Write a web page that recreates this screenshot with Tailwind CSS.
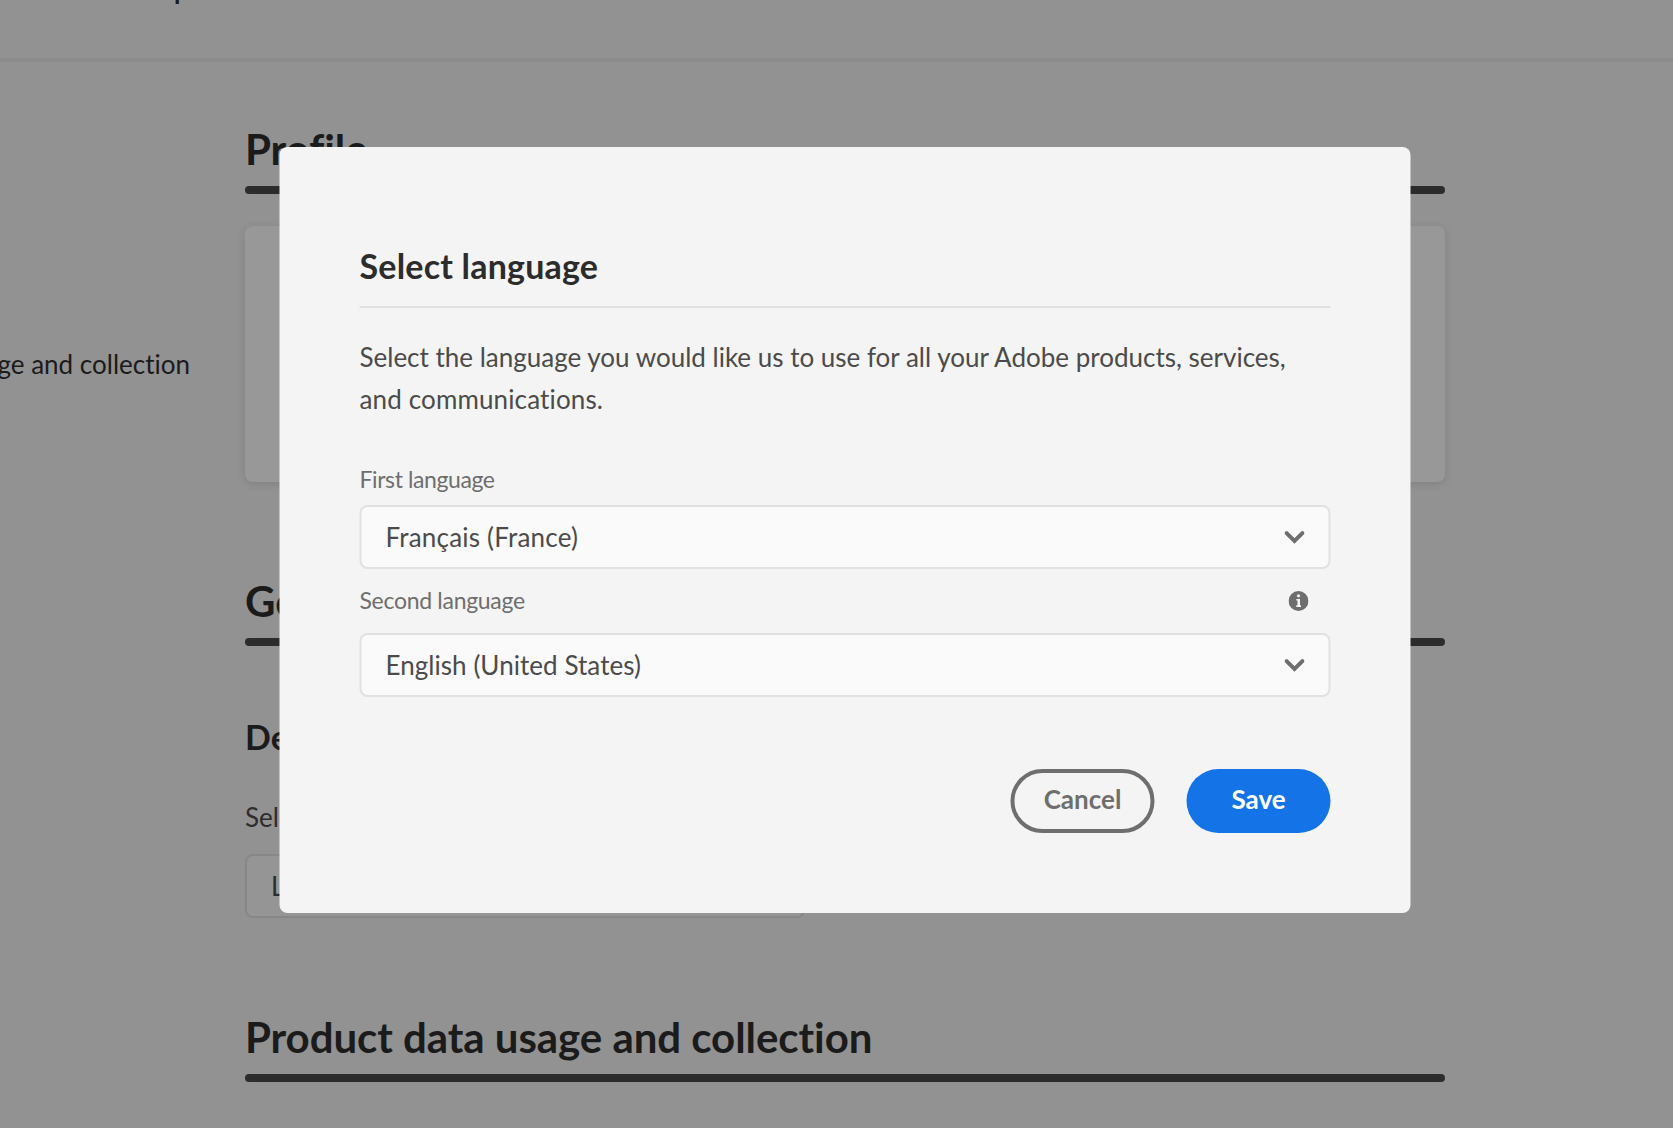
<!DOCTYPE html>
<html lang="en">
<head>
<meta charset="utf-8">
<title>Select language</title>
<script src="https://cdn.jsdelivr.net/npm/@tailwindcss/browser@4"></script>
</head>
<body class="relative h-[1128px] w-[1673px] overflow-hidden bg-[#929292] font-['Lato',sans-serif] text-[#1b1b1b] [font-variant-ligatures:none]">
  <div class="flex h-full flex-col overflow-hidden">
    <header class="h-[62px] shrink-0 overflow-hidden border-b-4 border-[#8b8b8b] pl-[174px]">
      <p class="-mt-[31px] text-[26px] font-bold leading-[42px]">p</p>
    </header>
    <div class="flex">
      <nav class="flex w-[190px] shrink-0 justify-end overflow-hidden pt-[281px]">
        <a class="whitespace-nowrap text-[26px] leading-[42px]">Product data usage and collection</a>
      </nav>
      <main class="ml-[55px] w-[1200px] shrink-0 pt-[63px]">
        <section>
          <h1 class="text-[42px] font-bold leading-[48px] tracking-[-0.05px]">Profile</h1>
          <div class="mt-[13px] h-2 rounded-full bg-[#2c2c2c]"></div>
          <div class="mt-8 h-64 rounded-lg bg-[#989898] shadow-[0_2px_8px_rgba(0,0,0,0.12)]"></div>
        </section>
        <section class="pt-[95px]">
          <h1 class="text-[42px] font-bold leading-[48px] tracking-[-0.05px]">General</h1>
          <div class="mt-[13px] h-2 rounded-full bg-[#2c2c2c]"></div>
          <h2 class="mt-[71px] text-[34px] font-bold leading-[40px]">Default</h2>
          <p class="mt-[39px] text-[26px] leading-[42px] text-[#2d2d2d]">Select</p>
          <div class="mt-4 flex h-16 w-[560px] items-center rounded-lg border-2 border-[#878787] bg-[#959595] pl-6 pt-px text-[26px] text-[#2d2d2d]">L</div>
        </section>
        <section class="pt-[95px]">
          <h1 class="text-[42px] font-bold leading-[48px] tracking-[-0.05px]">Product data usage and collection</h1>
          <div class="mt-[13px] h-2 rounded-full bg-[#2c2c2c]"></div>
        </section>
      </main>
    </div>
  </div>

  <div role="dialog" class="absolute left-[279px] top-[147px] flex h-[766px] w-[1131px] translate-x-[0.5px] flex-col rounded-lg bg-[#f4f4f4] px-20 pt-[99px] text-[#4b4b4b]">
    <h2 class="text-[34px] font-bold leading-[40px] tracking-[0.2px] text-[#2c2c2c]">Select language</h2>
    <div class="mt-5 h-0.5 shrink-0 bg-[#e1e1e1]"></div>
    <p class="mt-[28px] whitespace-nowrap text-[26px] leading-[42px]">Select the language you would like us to use for all your Adobe products, services,<br><span class="tracking-[0.14px]">and communications.</span></p>
    <label class="mt-[43px] text-[23px] leading-8 tracking-[-0.4px] text-[#6e6e6e]">First language</label>
    <div class="mt-[10px] flex h-16 shrink-0 items-center justify-between rounded-lg border-2 border-[#e1e1e1] bg-[#fafafa] pl-6 pr-6 text-[26px]">
      <span class="tracking-[0.2px]">Français (France)</span>
      <svg class="h-[13px] w-5" viewBox="0 0 20 13" fill="none" stroke="#6e6e6e" stroke-width="4" stroke-linecap="round"><path d="M2.1 2.2 10 10 17.9 2.2"/></svg>
    </div>
    <div class="mt-4 flex h-8 shrink-0 items-center justify-between pr-[22px]">
      <label class="pb-0.5 text-[23px] leading-[30px] tracking-[-0.3px] text-[#6e6e6e]">Second language</label>
      <svg class="h-5 w-5" viewBox="0 0 20 20"><circle cx="10" cy="10" r="10" fill="#6e6e6e"/><circle cx="10" cy="4.8" r="1.6" fill="#f4f4f4"/><path d="M7.8 8h3.7v6.3h1v1.6H7.8v-1.6h1.2V9.6H7.8z" fill="#f4f4f4"/></svg>
    </div>
    <div class="mt-4 flex h-16 shrink-0 items-center justify-between rounded-lg border-2 border-[#e1e1e1] bg-[#fafafa] pl-6 pr-6 text-[26px]">
      <span class="tracking-[0.05px]">English (United States)</span>
      <svg class="h-[13px] w-5" viewBox="0 0 20 13" fill="none" stroke="#6e6e6e" stroke-width="4" stroke-linecap="round"><path d="M2.1 2.2 10 10 17.9 2.2"/></svg>
    </div>
    <div class="mt-[72px] flex justify-end gap-8 text-[26px] font-bold">
      <button class="flex h-16 w-36 justify-center rounded-full border-4 border-[#6e6e6e] leading-[52px] text-[#6e6e6e]">Cancel</button>
      <button class="flex h-16 w-36 justify-center rounded-full bg-[#1473e6] leading-[60px] text-white">Save</button>
    </div>
  </div>
</body>
</html>
